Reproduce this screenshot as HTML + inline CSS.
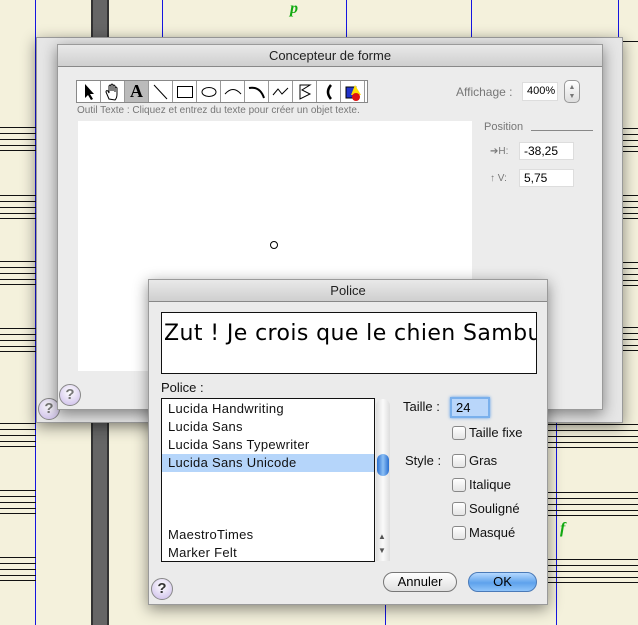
<!DOCTYPE html>
<html><head><meta charset="utf-8"><style>
*{margin:0;padding:0;box-sizing:border-box}
body{width:638px;height:625px;overflow:hidden;position:relative;background:#f4f1dc;font-family:"Liberation Sans",sans-serif}
.a{position:absolute}
.sl{position:absolute;height:1px;background:#111}
.vb{position:absolute;width:1px;background:#1515e0}
.win{position:absolute;background:#ececec;border:1px solid #9a9a9a;box-shadow:0 4px 14px rgba(0,0,0,.45)}
.tb{position:absolute;left:0;right:0;top:0;height:22px;background:linear-gradient(#e9e9e9,#cfcfcf);border-bottom:1px solid #888;text-align:center;font-size:13px;line-height:22px;color:#222}
.fld{position:absolute;background:#fff;border:1px solid #c8c8c8;font-size:12px;padding-left:4px;line-height:16px}
.cb{position:absolute;width:14px;height:14px;border:1px solid #888;border-radius:3px;background:linear-gradient(#fff,#e4e4e4)}
.lb{position:absolute;font-size:13px;color:#111}
.help{position:absolute;width:22px;height:22px;border-radius:50%;border:1px solid #888;background:radial-gradient(circle at 50% 35%,#fff,#c9b8e8);font-size:15px;font-weight:bold;text-align:center;line-height:20px;color:#333}
.row{position:absolute;left:6px;font-size:13px;color:#111;letter-spacing:.3px}
.tool{position:absolute;top:0;width:24px;height:22px;border-right:1px solid #999;background:#fff;text-align:center}
.st{position:absolute;height:24px;border-top:1px solid #111;border-bottom:1px solid #111;background:repeating-linear-gradient(#0000 0 5px,#111 5px 6px)}
</style></head><body>
<div class="a" style="left:91px;top:0;width:18px;height:625px;background:#666;border-left:2px solid #333;border-right:2px solid #333"></div>
<div class="vb" style="left:35px;top:0;height:625px"></div>
<div class="vb" style="left:162px;top:0;height:45px"></div>
<div class="vb" style="left:346px;top:0;height:45px"></div>
<div class="vb" style="left:471px;top:0;height:45px"></div>
<div class="vb" style="left:618px;top:0;height:45px"></div>
<div class="vb" style="left:556px;top:420px;height:205px"></div>
<div class="vb" style="left:385px;top:600px;height:25px"></div>
<div class="sl" style="left:160px;top:41px;width:478px"></div>
<div class="st" style="left:0;top:127px;width:36px"></div>
<div class="st" style="left:0;top:195px;width:36px"></div>
<div class="st" style="left:0;top:261px;width:36px"></div>
<div class="st" style="left:0;top:328px;width:36px"></div>
<div class="st" style="left:0;top:423px;width:36px"></div>
<div class="st" style="left:0;top:490px;width:36px"></div>
<div class="st" style="left:0;top:557px;width:36px"></div>
<div class="st" style="left:605px;top:128px;width:33px"></div>
<div class="st" style="left:605px;top:195px;width:33px"></div>
<div class="st" style="left:605px;top:262px;width:33px"></div>
<div class="st" style="left:605px;top:327px;width:33px"></div>
<div class="st" style="left:548px;top:424px;width:90px"></div>
<div class="st" style="left:548px;top:492px;width:90px"></div>
<div class="st" style="left:548px;top:559px;width:90px"></div>
<div class="a" style="left:560px;top:520px;color:#1a1;font:italic bold 16px 'Liberation Serif',serif">f</div>
<div class="a" style="left:290px;top:0px;color:#1a1;font:italic bold 16px 'Liberation Serif',serif">p</div>

<div class="win" style="left:36px;top:37px;width:587px;height:386px;background:#e6e6e6">
 <div class="a" style="left:511px;top:345px;width:45px;height:18px;border:1px solid #aaa;border-radius:9px;font-size:12px;color:#999;text-align:center;line-height:16px">OK</div>
 <div class="help" style="left:1px;top:360px;color:#777">?</div>
</div>
<div class="win" style="left:57px;top:44px;width:546px;height:366px">
 <div class="tb">Concepteur de forme</div>
 <div class="a" style="left:18px;top:35px;width:292px;height:23px;border:1px solid #888;background:#fff;overflow:hidden">
  <div class="tool" style="left:0"><svg width="24" height="22"><path d="M8 3V17L11 14L14 19L16 18L13 13H17Z" fill="#000"/></svg></div>
  <div class="tool" style="left:24px"><svg width="24" height="22"><path d="M8 18L5 11Q5 9 7 10L8 12V5Q9 3 10 5V10V4Q11 2 12 4V10V5Q13 3 14 5V11V7Q15 5 16 7V13Q16 17 14 19Z" fill="#fff" stroke="#000" stroke-width="1"/></svg></div>
  <div class="tool" style="left:48px;background:#bbb;font:bold 18px 'Liberation Serif',serif">A</div>
  <div class="tool" style="left:72px"><svg width="24" height="22"><path d="M5 4L18 18" stroke="#000"/></svg></div>
  <div class="tool" style="left:96px"><svg width="24" height="22"><rect x="4.5" y="5.5" width="15" height="11" fill="none" stroke="#000"/></svg></div>
  <div class="tool" style="left:120px"><svg width="24" height="22"><ellipse cx="12" cy="11" rx="7" ry="4.5" fill="none" stroke="#000"/></svg></div>
  <div class="tool" style="left:144px"><svg width="24" height="22"><path d="M4 13Q12 4 20 13" fill="none" stroke="#000"/></svg></div>
  <div class="tool" style="left:168px"><svg width="24" height="22"><path d="M4 7Q15 5 19 17" fill="none" stroke="#000" stroke-width="2"/></svg></div>
  <div class="tool" style="left:192px"><svg width="24" height="22"><path d="M4 14L9 8L13 13L19 7" fill="none" stroke="#000"/></svg></div>
  <div class="tool" style="left:216px"><svg width="24" height="22"><path d="M7 4V18L17 13L9 9L17 4Z" fill="none" stroke="#000"/></svg></div>
  <div class="tool" style="left:240px"><svg width="24" height="22"><path d="M14 4Q8 11 14 18" fill="none" stroke="#000" stroke-width="2.5"/></svg></div>
  <div class="tool" style="left:264px"><svg width="24" height="22"><rect x="5" y="6" width="10" height="11" fill="#23c" stroke="#000"/><path d="M14 4L20 14H10Z" fill="#fd0"/><circle cx="15" cy="16" r="4" fill="#d11"/></svg></div>
 </div>
 <div class="a" style="left:19px;top:60px;font-size:10px;color:#777">Outil Texte : Cliquez et entrez du texte pour créer un objet texte.</div>
 <div class="a" style="left:20px;top:76px;width:394px;height:250px;background:#fff"></div>
 <div class="a" style="left:212px;top:196px;width:8px;height:8px;border:1px solid #000;border-radius:50%"></div>
 <div class="a" style="left:398px;top:40px;font-size:12px;color:#777">Affichage :</div>
 <div class="fld" style="left:464px;top:37px;width:36px;height:19px;font-size:11px;line-height:17px;border-color:#ddd">400%</div>
 <div class="a" style="left:506px;top:35px;width:16px;height:23px;border:1px solid #999;border-radius:5px;background:linear-gradient(#fff,#ddd);font-size:7px;text-align:center;line-height:9px;color:#777;padding-top:2px">▲<br>▼</div>
 <div class="a" style="left:426px;top:76px;font-size:11px;color:#777">Position</div>
 <div class="a" style="left:473px;top:85px;width:62px;height:1px;background:#888"></div>
 <div class="a" style="left:432px;top:101px;font-size:10px;color:#777">➔H:</div>
 <div class="fld" style="left:461px;top:97px;width:55px;height:18px;border-color:#ddd">-38,25</div>
 <div class="a" style="left:432px;top:128px;font-size:10px;color:#777">↑ V:</div>
 <div class="fld" style="left:461px;top:124px;width:55px;height:18px;border-color:#ddd">5,75</div>
 <div class="help" style="left:1px;top:339px;color:#777">?</div>
</div>

<div class="win" style="left:148px;top:279px;width:400px;height:326px;background:#ebebeb">
 <div class="tb" style="font-size:13px">Police</div>
 <div class="a" style="left:12px;top:32px;width:376px;height:62px;border:1px solid #111;background:#fff;overflow:hidden;white-space:nowrap;font:22px 'DejaVu Sans',sans-serif;padding:8px 0 0 2px;letter-spacing:.4px">Zut ! Je crois que le chien Sambuca</div>
 <div class="lb" style="left:12px;top:100px">Police :</div>
 <div class="a" style="left:12px;top:118px;width:214px;height:164px;border:1px solid #111;background:#fff">
  <div class="row" style="top:2px">Lucida Handwriting</div>
  <div class="row" style="top:20px">Lucida Sans</div>
  <div class="row" style="top:38px">Lucida Sans Typewriter</div>
  <div class="a" style="left:0;top:55px;width:212px;height:18px;background:#b5d5fa"></div>
  <div class="row" style="top:56px">Lucida Sans Unicode</div>
  <div class="row" style="top:128px">MaestroTimes</div>
  <div class="row" style="top:146px">Marker Felt</div>
 </div>
 <div class="a" style="left:227px;top:119px;width:14px;height:162px;background:linear-gradient(90deg,#ddd,#fafafa,#ddd);border-radius:7px 7px 0 0"></div>
 <div class="a" style="left:228px;top:174px;width:12px;height:22px;border-radius:6px;background:linear-gradient(90deg,#2a6fd0,#8cc0f5,#2a6fd0)"></div>
 <div class="a" style="left:229px;top:252px;font-size:8px;color:#555">▲</div>
 <div class="a" style="left:229px;top:266px;font-size:8px;color:#555">▼</div>
 <div class="lb" style="left:254px;top:119px">Taille :</div>
 <div class="fld" style="left:301px;top:117px;width:40px;height:21px;background:#b9d6fa;border:2px solid #7ab0ec;box-shadow:0 0 3px #5a9de8;font-size:13px;line-height:17px">24</div>
 <div class="cb" style="left:303px;top:146px"></div><div class="lb" style="left:320px;top:145px">Taille fixe</div>
 <div class="lb" style="left:256px;top:173px">Style :</div>
 <div class="cb" style="left:303px;top:174px"></div><div class="lb" style="left:320px;top:173px">Gras</div>
 <div class="cb" style="left:303px;top:198px"></div><div class="lb" style="left:320px;top:197px">Italique</div>
 <div class="cb" style="left:303px;top:222px"></div><div class="lb" style="left:320px;top:221px">Souligné</div>
 <div class="cb" style="left:303px;top:246px"></div><div class="lb" style="left:320px;top:245px">Masqué</div>
 <div class="a" style="left:234px;top:292px;width:74px;height:20px;border:1px solid #777;border-radius:10px;background:linear-gradient(#fff,#e0e0e0);font-size:13px;text-align:center;line-height:18px">Annuler</div>
 <div class="a" style="left:319px;top:292px;width:69px;height:20px;border:1px solid #4a7ab8;border-radius:10px;background:linear-gradient(#b6d9ff,#5ea2ec 55%,#8fc4fa);font-size:13px;text-align:center;line-height:18px">OK</div>
 <div class="help" style="left:2px;top:298px">?</div>
</div>
</body></html>
